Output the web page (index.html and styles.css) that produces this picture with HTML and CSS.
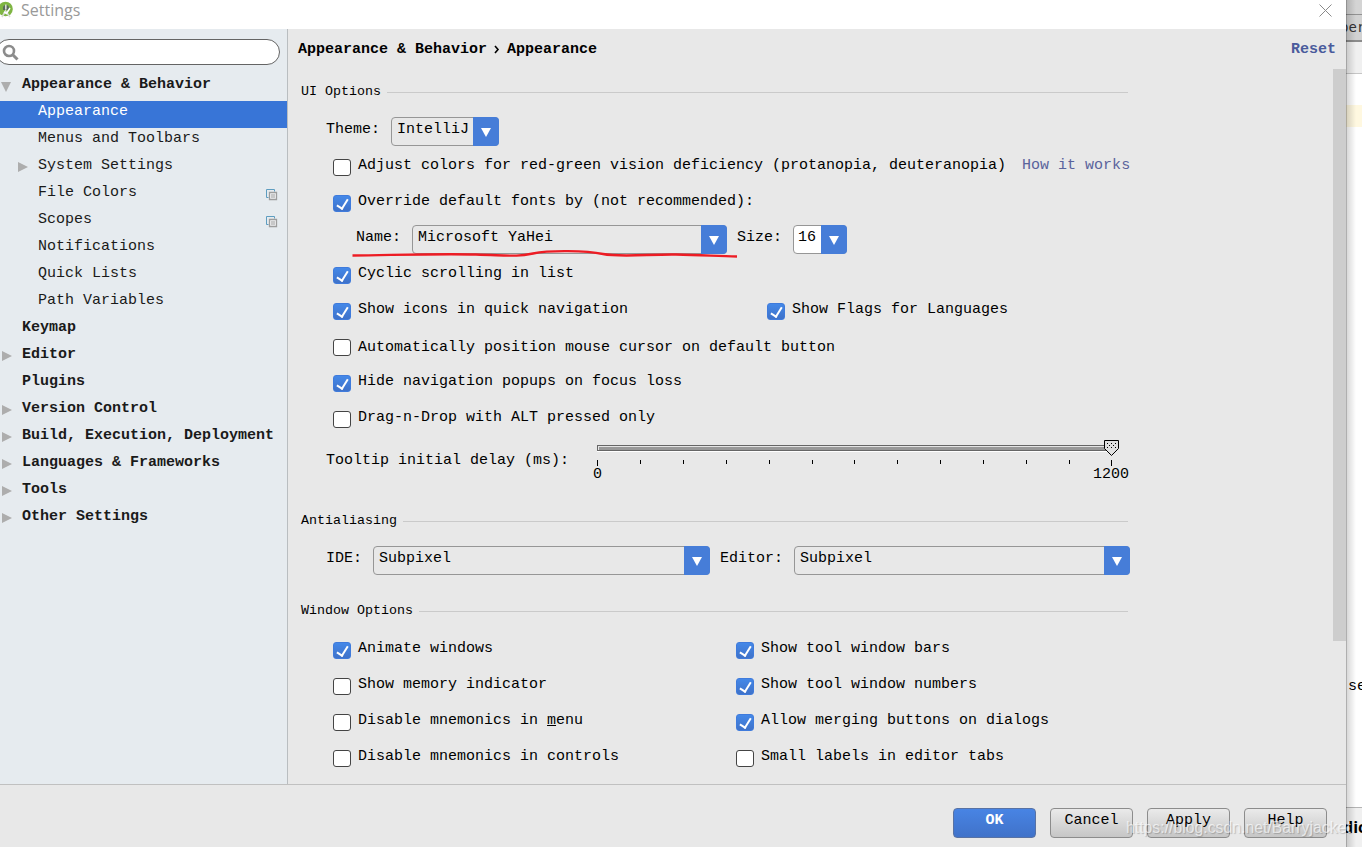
FILE: index.html
```html
<!DOCTYPE html>
<html lang="en">
  <head>
    <meta charset="UTF-8" />
    <title>Settings</title>
    <meta name="viewport" content="width=device-width, initial-scale=1" />
    <link rel="stylesheet" href="styles.css">
  </head>

  <body>
    <div class="dialog">
      <div class="titlebar">
        <svg class="logo" width="13" height="18" viewBox="0 0 13 18">
          <circle cx="5.5" cy="9" r="7.3" fill="#7fb543" />
          <path d="M3 8a3 3 0 0 1 6 0v2H3z" fill="#5b6b5b" />
          <path d="M5.8 4.5v5M2 17l3.5-6L10 17" fill="none" stroke="#d9ddd5" stroke-width="1.6" />
          <path d="M4 12l2.5 1.5L10 8" fill="none" stroke="#fff" stroke-width="1.5" />
        </svg>
        <span class="title">Settings</span>
        <svg class="close" width="13" height="13" viewBox="0 0 13 13">
          <path d="M.5.5l12 12M12.5.5l-12 12" stroke="#8a8a8a" fill="none" />
        </svg>
      </div>

      <div class="body">
        <!-- Settings tree -->
        <div class="sidebar">
          <div class="search">
            <svg width="18" height="18" viewBox="0 0 18 18">
              <circle cx="7" cy="7" r="5" fill="none" stroke="#8c8c8c" stroke-width="2.6" />
              <path d="M10.5 10.5l5 5" stroke="#8c8c8c" stroke-width="3" />
            </svg>
          </div>
          <div class="tree">
            <div class="item group"><i class="arrow open"></i>Appearance &amp; Behavior</div>
            <div class="item child selected">Appearance</div>
            <div class="item child">Menus and Toolbars</div>
            <div class="item child"><i class="arrow"></i>System Settings</div>
            <div class="item child">File Colors
              <svg class="copy" width="12" height="12" viewBox="0 0 12 12">
                <path d="M2.5 8.5h-2v-8h8v2" fill="none" stroke="#5e9dc0" />
                <path d="M3.5 3.5h7v7h-7z" fill="#f2f3f4" stroke="#9d9d9d" stroke-width="1.3" />
                <path d="M5 6h4M5 8h4" stroke="#9d9d9d" />
              </svg>
            </div>
            <div class="item child">Scopes
              <svg class="copy" width="12" height="12" viewBox="0 0 12 12">
                <path d="M2.5 8.5h-2v-8h8v2" fill="none" stroke="#5e9dc0" />
                <path d="M3.5 3.5h7v7h-7z" fill="#f2f3f4" stroke="#9d9d9d" stroke-width="1.3" />
                <path d="M5 6h4M5 8h4" stroke="#9d9d9d" />
              </svg>
            </div>
            <div class="item child">Notifications</div>
            <div class="item child">Quick Lists</div>
            <div class="item child">Path Variables</div>
            <div class="item group">Keymap</div>
            <div class="item group"><i class="arrow"></i>Editor</div>
            <div class="item group">Plugins</div>
            <div class="item group"><i class="arrow"></i>Version Control</div>
            <div class="item group"><i class="arrow"></i>Build, Execution, Deployment</div>
            <div class="item group"><i class="arrow"></i>Languages &amp; Frameworks</div>
            <div class="item group"><i class="arrow"></i>Tools</div>
            <div class="item group"><i class="arrow"></i>Other Settings</div>
          </div>
        </div>

        <!-- Appearance page -->
        <div class="page">
          <div class="crumbs">
            <span>Appearance &amp; Behavior</span><svg width="6" height="10" viewBox="0 0 6 10"><path d="M1 1l3 3.5L1 8" fill="none" stroke="#000" stroke-width="1.6" /></svg><span>Appearance</span>
            <a class="reset">Reset</a>
          </div>

          <div class="content">
            <div class="section-title ui-title">UI Options</div>
            <div class="row theme-row">
              <label>Theme:</label>
              <div class="select theme">IntelliJ</div>
            </div>
            <div class="row"><i class="box"></i><span>Adjust colors for red-green vision deficiency (protanopia, deuteranopia)</span><a class="link">How it works</a></div>
            <div class="row"><i class="box on"></i><span>Override default fonts by (not recommended):</span></div>
            <div class="row name-row">
              <label>Name:</label>
              <div class="select font-name">Microsoft YaHei</div>
              <label class="size-label">Size:</label>
              <div class="select font-size">16</div>
              <svg class="mark" width="388" height="12" viewBox="0 0 388 12">
                <path d="M1.500 6.500C45 6 90 4.500 125 5.500S165 8 182 4.500S235 1.500 252 5S300 5 325 5.500S365 7 386 7.500" fill="none" stroke="#ed1c24" stroke-width="2.400" />
              </svg>
            </div>
            <div class="row"><i class="box on"></i><span>Cyclic scrolling in list</span></div>
            <div class="row columns">
              <div class="cell nav-cell"><i class="box on"></i><span>Show icons in quick navigation</span></div>
              <div class="cell"><i class="box on"></i><span>Show Flags for Languages</span></div>
            </div>
            <div class="row lower"><i class="box"></i><span>Automatically position mouse cursor on default button</span></div>
            <div class="row"><i class="box on"></i><span>Hide navigation popups on focus loss</span></div>
            <div class="row"><i class="box"></i><span>Drag-n-Drop with ALT pressed only</span></div>

            <div class="delay">
              <label>Tooltip initial delay (ms):</label>
              <div class="slider">
                <svg width="524" height="30" viewBox="0 0 524 30" shape-rendering="crispEdges">
                  <path d="M0 11.500h515" stroke="#fff" />
                  <path d="M.5 5.500h514v5H.5z" fill="#999" stroke="#666" />
                  <path d="M1 6.500h513M1.500 6v4" stroke="#e4e4e4" />
                  <path d="M.5 20v6M514.500 20v6M43.500 20v4M86.500 20v4M129.500 20v4M172.500 20v4M215.500 20v4M257.500 20v4M300.500 20v4M343.500 20v4M386.500 20v4M429.500 20v4M472.500 20v4" stroke="#000" />
                  <path d="M507.500.5h14v8l-7 7l-7-7z" fill="#e0e0e0" stroke="#000" shape-rendering="auto" />
                  <path d="M510 3.500h10M510 7.500h10" stroke="#000" stroke-dasharray="1 3" />
                  <path d="M512 5.500h6" stroke="#000" stroke-dasharray="1 3" />
                </svg>
                <div class="scale"><span>0</span><span>1200</span></div>
              </div>
            </div>

            <div class="section-title aa-title">Antialiasing</div>
            <div class="row aa-row">
              <label>IDE:</label>
              <div class="select ide">Subpixel</div>
              <label class="editor-label">Editor:</label>
              <div class="select editor">Subpixel</div>
            </div>

            <div class="section-title win-title">Window Options</div>
            <div class="window-options">
              <div class="cell"><i class="box on"></i><span>Animate windows</span></div>
              <div class="cell"><i class="box on"></i><span>Show tool window bars</span></div>
              <div class="cell"><i class="box"></i><span>Show memory indicator</span></div>
              <div class="cell"><i class="box on"></i><span>Show tool window numbers</span></div>
              <div class="cell"><i class="box"></i><span>Disable mnemonics in <u>m</u>enu</span></div>
              <div class="cell"><i class="box on"></i><span>Allow merging buttons on dialogs</span></div>
              <div class="cell"><i class="box"></i><span>Disable mnemonics in controls</span></div>
              <div class="cell"><i class="box"></i><span>Small labels in editor tabs</span></div>
            </div>
          </div>
          <div class="scrollbar"></div>
        </div>
      </div>

      <div class="footer">
        <button class="button primary">OK</button>
        <button class="button">Cancel</button>
        <button class="button">Apply</button>
        <button class="button">Help</button>
      </div>
    </div>

    <!-- Editor window behind the dialog -->
    <div class="behind">
      <div class="tab-top"></div>
      <div class="tab"><span>per</span></div>
      <div class="toolbar"></div>
      <div class="code">
        <div class="caret-line"></div>
        <div class="code-text">se</div>
      </div>
      <div class="status"><span>dic</span></div>
    </div>

    <div class="watermark">https://blog.csdn.net/Barryjacket</div>
  </body>
</html>
```
FILE: styles.css
```css
* {
  box-sizing: border-box;
}

body {
  margin: 0;
  height: 847px;
  display: flex;
  overflow: hidden;
  position: relative;
  font-family: "Liberation Mono", monospace;
  font-size: 15px;
  line-height: 18px;
  color: #000;
}

.dialog {
  width: 1346px;
  height: 847px;
  flex: none;
  display: flex;
  flex-direction: column;
  background: #e8e8e8;
}

.titlebar {
  height: 29px;
  flex: none;
  display: flex;
  align-items: flex-start;
  background: #fff;
}

.logo {
  margin-right: 8px;
}

.title {
  font-family: "Open Sans", sans-serif;
  font-size: 16px;
  line-height: 21px;
  color: #999;
}

.close {
  margin: 4px 14px 0 auto;
}

.body {
  height: 756px;
  flex: none;
  display: flex;
  border-bottom: 1px solid #c0c0c0;
}

/* tree */
.sidebar {
  width: 288px;
  flex: none;
  padding-top: 10px;
  background: #e6ebef;
  border-right: 1px solid #b9bdc0;
}

.search {
  width: 284px;
  height: 26px;
  margin-left: -4px;
  padding: 4px 0 0 5px;
  background: #fff;
  border: 1px solid #646464;
  border-radius: 13px;
}

.tree {
  padding-top: 9px;
}

.item {
  height: 27px;
  display: flex;
  align-items: center;
  padding-bottom: 6px;
  position: relative;
  color: #1a1a1a;
}

.group {
  padding-left: 22px;
  font-weight: bold;
}

.child {
  padding-left: 38px;
}

.selected {
  background: #3875d7;
  color: #fff;
}

.arrow {
  position: absolute;
  left: 2px;
  top: 7px;
  border-left: 10px solid #adadad;
  border-top: 5.5px solid transparent;
  border-bottom: 5.5px solid transparent;
}

.child .arrow {
  left: 18px;
}

.arrow.open {
  left: 1px;
  top: 8px;
  border-top: 10px solid #adadad;
  border-left: 5.5px solid transparent;
  border-right: 5.5px solid transparent;
  border-bottom: none;
}

.copy {
  margin: 5px 9px 0 auto;
}

/* page */
.page {
  flex: 1;
  position: relative;
}

.crumbs {
  height: 40px;
  display: flex;
  align-items: center;
  padding: 2px 10px 0;
  font-weight: bold;
}

.crumbs svg {
  margin: 0 7px 0 7px;
}

.reset {
  margin-left: auto;
  color: #4a5b9c;
}

.section-title {
  width: 827px;
  height: 18px;
  margin-left: 13px;
  display: flex;
  align-items: center;
  font-size: 13.33px;
}

.section-title::after {
  content: "";
  flex: 1;
  height: 1px;
  margin: 1px 0 0 6px;
  background: #cacaca;
}

.ui-title {
  margin-top: 14px;
}

.row {
  height: 36px;
  display: flex;
  align-items: center;
  padding-left: 45px;
}

.row > span,
.row > a,
.row > label,
.cell > span {
  position: relative;
  top: -1px;
}

.cell {
  height: 36px;
  display: flex;
  align-items: center;
}

.row.lower > span {
  top: 1px;
}

.box {
  width: 18px;
  height: 17px;
  flex: none;
  margin-right: 7px;
  background: #fff;
  border: 1px solid #444;
  border-radius: 3px;
}

.box.on {
  border-color: #3f7bdc;
  background: linear-gradient(#4488e8, #3f72c9);
}

.box.on::after {
  content: "";
  display: block;
  width: 5px;
  height: 10px;
  margin: 1px 0 0 5px;
  border: solid #fff;
  border-width: 0 2px 2px 0;
  transform: rotate(32deg);
}

.link {
  margin-left: 16px;
  color: #5a639c;
}

.select {
  height: 29px;
  position: relative;
  padding: 3px 0 0 5px;
  border: 1px solid #969696;
  border-radius: 4px;
}

/* blue drop-down part */
.select::before {
  content: "";
  position: absolute;
  top: -1px;
  right: -1px;
  bottom: -1px;
  width: 26px;
  background: #467dd8;
  border-radius: 0 4px 4px 0;
}

.select::after {
  content: "";
  position: absolute;
  right: 7px;
  top: 10px;
  border-top: 9px solid #fff;
  border-left: 5px solid transparent;
  border-right: 5px solid transparent;
}

.theme-row {
  height: 36px;
  margin-top: 12px;
  padding-left: 38px;
}

.theme {
  width: 108px;
  margin-left: 11px;
}

.name-row {
  position: relative;
  padding-left: 68px;
}

.font-name {
  width: 315px;
  margin-left: 11px;
}

.size-label {
  margin-left: 10px;
}

.font-size {
  width: 54px;
  margin-left: 11px;
  padding-left: 4px;
  background: #fff;
}

.mark {
  position: absolute;
  left: 63px;
  top: 28px;
}

.nav-cell {
  width: 434px;
}

.delay {
  height: 75px;
  display: flex;
  padding-left: 38px;
}

.delay label {
  width: 271px;
  padding-top: 15px;
}

.slider {
  padding-top: 3px;
}

.slider svg {
  display: block;
}

.scale {
  width: 536px;
  margin: -4px 0 0 -4px;
  display: flex;
  justify-content: space-between;
}

.aa-row {
  padding-left: 38px;
  margin-top: 12px;
}

.ide {
  width: 337px;
  margin-left: 11px;
}

.editor-label {
  margin-left: 10px;
}

.editor {
  width: 336px;
  margin-left: 11px;
}

.win-title {
  margin-top: 24px;
}

.window-options {
  display: grid;
  grid-template-columns: 403px 1fr;
  margin-top: 12px;
  padding-left: 45px;
}

.scrollbar {
  position: absolute;
  top: 40px;
  right: 0;
  width: 13px;
  height: 572px;
  background: #cdcdcd;
}

/* buttons */
.footer {
  flex: 1;
  display: flex;
  justify-content: flex-end;
  gap: 14px;
  padding: 23px 19px 0 0;
}

.button {
  width: 83px;
  height: 30px;
  padding: 0 0 4px;
  font: inherit;
  color: #000;
  background: linear-gradient(#eaeaea, #c6c6c6);
  border: 1px solid #8c8c8c;
  border-radius: 4px;
}

.button.primary {
  font-weight: bold;
  color: #fff;
  background: linear-gradient(#4884e4, #4072c9);
  border-color: #5872a4;
}

/* window behind */
.behind {
  width: 16px;
  display: flex;
  flex-direction: column;
  overflow: hidden;
  position: relative;
  background: #fff;
}

.behind::after {
  content: "";
  position: absolute;
  top: 0;
  bottom: 0;
  left: 0;
  width: 10px;
  background: linear-gradient(90deg, rgba(0, 0, 0, 0.4), rgba(0, 0, 0, 0.14) 15%, transparent);
}

.tab-top {
  height: 15px;
  background: #d4d4d4;
  border-bottom: 1px solid #929292;
}

.tab {
  height: 27px;
  padding-top: 3px;
  background: #d2d2d2;
  border-bottom: 2px solid #8c8c8c;
}

.tab span {
  margin-left: -6px;
  font-family: "DejaVu Sans Mono", monospace;
  font-size: 14px;
  color: #333;
}

.toolbar {
  height: 32px;
  background: #f0f0f0;
  border-bottom: 1px solid #c6c6c6;
}

.code {
  height: 733px;
  padding-top: 31px;
}

.caret-line {
  height: 22px;
  background: #fff8e0;
}

.code-text {
  margin: 551px 0 0 2px;
}

.status {
  flex: 1;
  padding-top: 10px;
  background: #f0f0f0;
  border-top: 1px solid #b4b4b4;
}

.status span {
  margin-left: -3px;
  font-family: "Open Sans", sans-serif;
  font-size: 16px;
  font-weight: bold;
}

.watermark {
  position: absolute;
  left: 1126px;
  top: 819px;
  font-family: "Liberation Sans", sans-serif;
  font-size: 15.8px;
  white-space: nowrap;
  color: rgba(255, 255, 255, 0.65);
  text-shadow: 1px 1px 1px rgba(0, 0, 0, 0.2);
}
```
